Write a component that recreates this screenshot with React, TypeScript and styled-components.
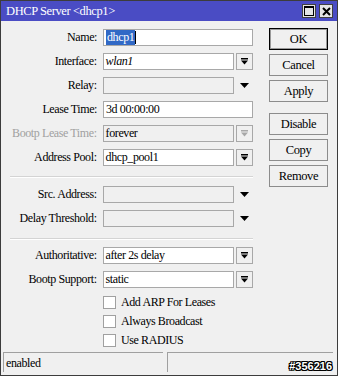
import React from "react";
import styled, { createGlobalStyle } from "styled-components";

const GlobalStyle = createGlobalStyle`
  html, body {
    margin: 0;
    padding: 0;
    background: #f0f0f0;
  }
  body {
    font-family: "Liberation Serif", "Times New Roman", serif;
    font-size: 12px;
    letter-spacing: -0.4px;
    color: #000;
  }
`;

const Window = styled.div`
  width: 338px;
  height: 376px;
  box-sizing: border-box;
  border: 1px solid #3c3c3c;
  background: #f0f0f0;
  display: flex;
  flex-direction: column;
`;

const TitleBar = styled.div`
  height: 20px;
  background: #4a4cc4;
  color: #fff;
  display: flex;
  align-items: center;
  justify-content: space-between;
  padding: 0 4px 0 5px;
  font-size: 12.5px;
`;

const TitleButtons = styled.div`
  display: flex;
  gap: 3px;
`;

const TitleButton = styled.div`
  width: 14px;
  height: 14px;
  box-sizing: border-box;
  border: 1px solid #404040;
  background: #e4e4e4;
  display: flex;
  align-items: center;
  justify-content: center;
`;

const Body = styled.div`
  flex: 1;
  display: flex;
`;

const Form = styled.div`
  width: 252px;
  padding-top: 8px;
  display: flex;
  flex-direction: column;
`;

const Section = styled.div`
  display: flex;
  flex-direction: column;
  gap: 7px;
`;

const Separator = styled.div<{ $top: number; $bottom: number }>`
  margin: ${(p) => `${p.$top}px 0 ${p.$bottom}px 9px`};
  height: 1px;
  background: #d4d4d4;
  border-bottom: 1px solid #fff;
`;

const Row = styled.div`
  display: flex;
  align-items: center;
  height: 17px;
`;

const Label = styled.div<{ $disabled?: boolean }>`
  width: 96px;
  margin-right: 6px;
  text-align: right;
  white-space: nowrap;
  color: ${(p) => (p.$disabled ? "#a0a0a0" : "#000")};
`;

const Field = styled.div<{ $disabled?: boolean; $short?: boolean; $italic?: boolean }>`
  box-sizing: border-box;
  width: ${(p) => (p.$short ? "132px" : "150px")};
  height: 17px;
  border: 1px solid #a8a8a8;
  background: ${(p) => (p.$disabled ? "#f0f0f0" : "#fff")};
  padding-left: 2px;
  line-height: 15px;
  font-style: ${(p) => (p.$italic ? "italic" : "normal")};
  display: flex;
  white-space: nowrap;
`;

const Selected = styled.span`
  background: #3169c6;
  color: #fff;
  padding: 0 1px;
`;

const Caret = styled.span`
  width: 1px;
  height: 13px;
  margin-top: 1px;
  background: #000;
`;

const DropButton = styled.div`
  box-sizing: border-box;
  width: 17px;
  height: 17px;
  margin-left: 2px;
  border: 1px solid #a8a8a8;
  background: #f0f0f0;
  display: flex;
  align-items: center;
  justify-content: center;
`;

const ArrowSlot = styled.div`
  width: 17px;
  margin-left: 2px;
  display: flex;
  justify-content: center;
`;

const CheckRows = styled.div`
  margin-top: 1px;
  display: flex;
  flex-direction: column;
  gap: 6px;
  padding-left: 102px;
`;

const CheckRow = styled.label`
  display: flex;
  align-items: center;
  height: 13px;
  gap: 5px;
`;

const CheckBox = styled.span`
  box-sizing: border-box;
  width: 13px;
  height: 13px;
  border: 1px solid #a0a0a0;
  background: #fff;
`;

const Buttons = styled.div`
  margin-left: 16px;
  padding-top: 7px;
  display: flex;
  flex-direction: column;
  gap: 4px;
`;

const Button = styled.div<{ $primary?: boolean; $spaced?: boolean }>`
  box-sizing: border-box;
  width: 59px;
  height: 22px;
  margin-top: ${(p) => (p.$spaced ? "7px" : "0")};
  border: 1px solid ${(p) => (p.$primary ? "#000" : "#8c8c8c")};
  box-shadow: ${(p) => (p.$primary ? "inset 0 0 0 1px #9a9a9a" : "none")};
  background: #f0f0f0;
  display: flex;
  align-items: center;
  justify-content: center;
  font-size: 12.5px;
`;

const StatusBar = styled.div`
  height: 20px;
  margin-bottom: 3px;
  padding: 0 4px 0 2px;
  display: flex;
  gap: 4px;
`;

const StatusCell = styled.div<{ $grow?: boolean }>`
  box-sizing: border-box;
  width: ${(p) => (p.$grow ? "auto" : "160px")};
  flex: ${(p) => (p.$grow ? "1" : "none")};
  border-top: 1px solid #a0a0a0;
  border-left: 1px solid #a0a0a0;
  padding: 2px 0 0 2px;
  display: flex;
  align-items: center;
  justify-content: ${(p) => (p.$grow ? "flex-end" : "flex-start")};
`;

const HexTag = styled.span`
  align-self: flex-end;
  font-family: "Liberation Sans", Arial, sans-serif;
  font-weight: bold;
  font-size: 11px;
  letter-spacing: 0;
  color: #fff;
  text-shadow: 1px 0 #000, -1px 0 #000, 0 1px #000, 0 -1px #000,
    1px 1px #000, -1px -1px #000, 1px -1px #000, -1px 1px #000;
  padding-right: 1px;
`;

const DropIcon = ({ color = "#000" }: { color?: string }) => (
  <svg width="7" height="7" viewBox="0 0 7 7">
    <rect x="0" y="0" width="7" height="1.5" fill={color} />
    <polygon points="0,2.5 7,2.5 3.5,6.5" fill={color} />
  </svg>
);

const Triangle = () => (
  <svg width="9" height="5" viewBox="0 0 9 5">
    <polygon points="0,0 9,0 4.5,5" fill="#000" />
  </svg>
);

type FieldRow = {
  label: string;
  value?: string;
  disabled?: boolean;
  kind: "text" | "drop" | "arrow";
  italic?: boolean;
  labelDisabled?: boolean;
};

const renderRow = (r: FieldRow) => (
  <Row key={r.label}>
    <Label $disabled={r.labelDisabled}>{r.label}</Label>
    <Field $disabled={r.disabled} $short={r.kind !== "text"} $italic={r.italic}>
      {r.value}
    </Field>
    {r.kind === "drop" && (
      <DropButton>
        <DropIcon color={r.disabled ? "#a8a8a8" : "#000"} />
      </DropButton>
    )}
    {r.kind === "arrow" && (
      <ArrowSlot>
        <Triangle />
      </ArrowSlot>
    )}
  </Row>
);

const generalRows: FieldRow[] = [
  { label: "Interface:", value: "wlan1", kind: "drop", italic: true },
  { label: "Relay:", kind: "arrow", disabled: true },
  { label: "Lease Time:", value: "3d 00:00:00", kind: "text" },
  { label: "Bootp Lease Time:", value: "forever", kind: "drop", disabled: true, labelDisabled: true },
  { label: "Address Pool:", value: "dhcp_pool1", kind: "drop" },
];

const delayRows: FieldRow[] = [
  { label: "Src. Address:", kind: "arrow", disabled: true },
  { label: "Delay Threshold:", kind: "arrow", disabled: true },
];

const authRows: FieldRow[] = [
  { label: "Authoritative:", value: "after 2s delay", kind: "drop" },
  { label: "Bootp Support:", value: "static", kind: "drop" },
];

const checks = ["Add ARP For Leases", "Always Broadcast", "Use RADIUS"];

export default function App() {
  return (
    <>
      <GlobalStyle />
      <Window>
        <TitleBar>
          <span>DHCP Server &lt;dhcp1&gt;</span>
          <TitleButtons>
            <TitleButton>
              <svg width="10" height="10" viewBox="0 0 10 10">
                <rect x="0.5" y="0.5" width="9" height="9" fill="none" stroke="#000" />
                <rect x="0" y="0" width="10" height="2" fill="#000" />
              </svg>
            </TitleButton>
            <TitleButton>
              <svg width="9" height="9" viewBox="0 0 9 9">
                <path d="M1 1 L8 8 M8 1 L1 8" stroke="#000" strokeWidth="2" />
              </svg>
            </TitleButton>
          </TitleButtons>
        </TitleBar>
        <Body>
          <Form>
            <Section>
              <Row>
                <Label>Name:</Label>
                <Field>
                  <Selected>dhcp1</Selected>
                  <Caret />
                </Field>
              </Row>
              {generalRows.map(renderRow)}
            </Section>
            <Separator $top={10} $bottom={8} />
            <Section>{delayRows.map(renderRow)}</Section>
            <Separator $top={11} $bottom={7} />
            <Section>
              {authRows.map(renderRow)}
              <CheckRows>
                {checks.map((c) => (
                  <CheckRow key={c}>
                    <CheckBox />
                    <span>{c}</span>
                  </CheckRow>
                ))}
              </CheckRows>
            </Section>
          </Form>
          <Buttons>
            <Button $primary>OK</Button>
            <Button>Cancel</Button>
            <Button>Apply</Button>
            <Button $spaced>Disable</Button>
            <Button>Copy</Button>
            <Button>Remove</Button>
          </Buttons>
        </Body>
        <StatusBar>
          <StatusCell>enabled</StatusCell>
          <StatusCell $grow>
            <HexTag>#356216</HexTag>
          </StatusCell>
        </StatusBar>
      </Window>
    </>
  );
}
